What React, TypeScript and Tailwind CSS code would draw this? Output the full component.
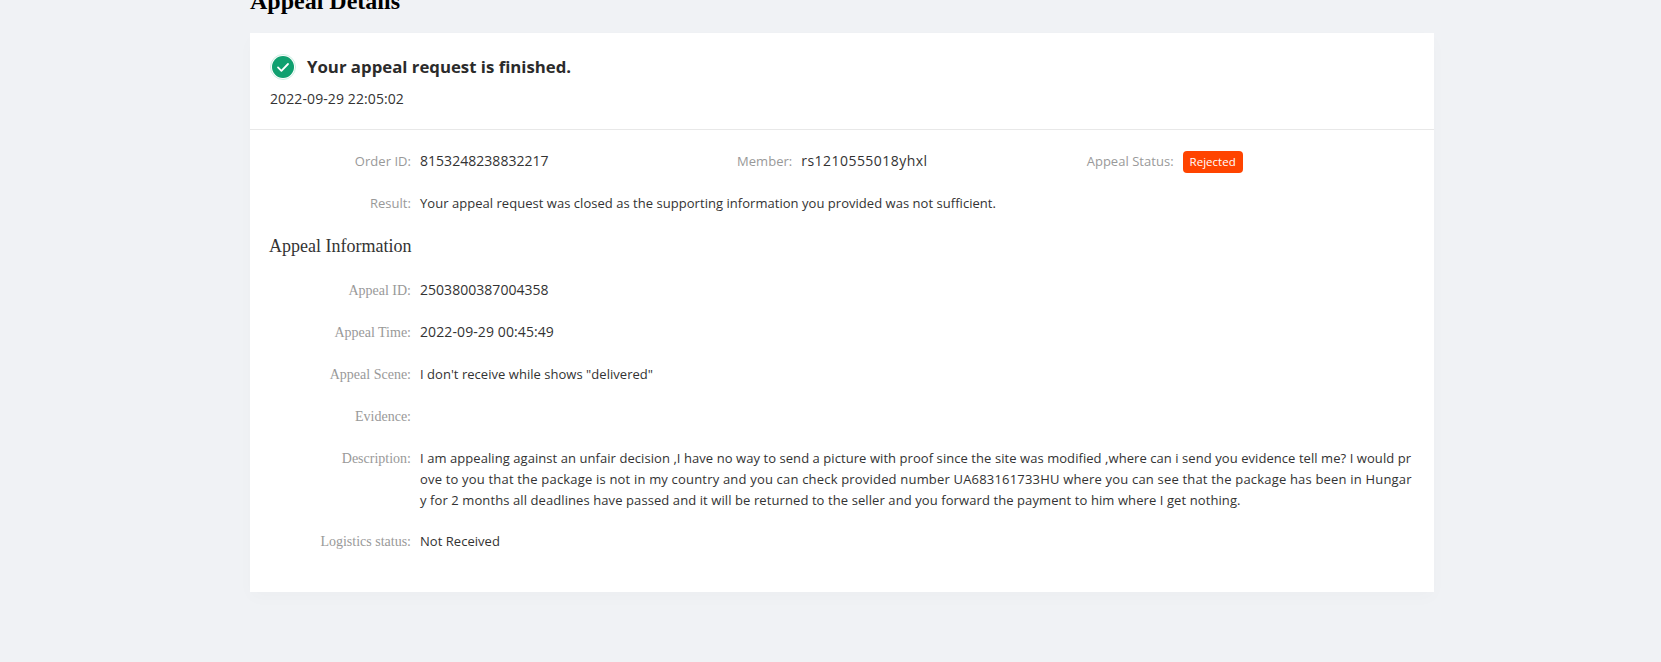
const sans = "font-['Open_Sans','Liberation_Sans',sans-serif]";

function Row({ label, serif, children, className = "" }: { label: string; serif?: boolean; children?: React.ReactNode; className?: string }) {
  return (
    <div className={`flex items-start text-[13px] leading-[21px] tracking-[0.035px] ${className}`}>
      <div className={`w-[141px] shrink-0 text-right text-[#999] ${serif ? "font-['Liberation_Serif',serif] text-[14px] tracking-normal" : ""}`}>{label}</div>
      <div className="ml-[9px] min-w-0 flex-1 text-[#333]">{children}</div>
    </div>
  );
}

function Num({ children, className = "" }: { children: React.ReactNode; className?: string }) {
  return <span className={`text-[14px] leading-[14px] ${className}`}>{children}</span>;
}

export default function App() {
  return (
    <div className={`h-[662px] overflow-hidden bg-[#f0f2f5] ${sans}`}>
      <div className="ml-[250px] w-[1184px]">
        <h1 className="-mt-[13px] h-[46px] font-['Liberation_Serif',serif] text-[24px] leading-[28px] font-bold text-black">Appeal Details</h1>
        <div className="h-[559px] bg-white shadow-[0_6px_16px_rgba(0,0,0,0.02)]">
          <div className="h-[97px] border-b border-[#e8e8e8] px-5 pt-[21px]">
            <div className="flex h-[26px] items-center gap-[11px]">
              <svg width="26" height="26" viewBox="0 0 26 26" className="shrink-0">
                <circle cx="13" cy="13" r="12.5" fill="#fff" stroke="#cdeee2" />
                <circle cx="13" cy="13" r="11" fill="#0fa06f" />
                <path d="M8 13.4l3.4 3.4L18 10" fill="none" stroke="#fff" strokeWidth="1.8" strokeLinecap="round" strokeLinejoin="round" />
              </svg>
              <div className="text-[16.8px] leading-[26px] font-bold text-[#2b2b2b]">Your appeal request is finished.</div>
            </div>
            <div className="mt-[8px] text-[14px] leading-[21px] tracking-[0.1px] text-[#333]">2022-09-29 22:05:02</div>
          </div>
          <div className="px-5 pt-[21px]">
            <div className="grid grid-cols-3">
              <Row label="Order ID:"><Num>8153248238832217</Num></Row>
              <Row label="Member:"><Num className="tracking-[0.45px]">rs1210555018yhxl</Num></Row>
              <Row label="Appeal Status:">
                <span className="inline-flex h-[22px] w-[60px] items-center justify-center rounded-[4px] bg-[#ff4400] text-[11.5px] leading-[22px] text-white">Rejected</span>
              </Row>
            </div>
            <Row label="Result:" className="mt-[20px]">Your appeal request was closed as the supporting information you provided was not sufficient.</Row>
            <h2 className="mt-[19px] -ml-px font-['Liberation_Serif',serif] text-[18px] leading-[26px] text-[#333]">Appeal Information</h2>
            <div className="mt-[21px] flex flex-col gap-[21px]">
              <Row serif label="Appeal ID:"><Num>2503800387004358</Num></Row>
              <Row serif label="Appeal Time:"><Num className="tracking-[0.1px]">2022-09-29 00:45:49</Num></Row>
              <Row serif label="Appeal Scene:">I don't receive while shows "delivered"</Row>
              <Row serif label="Evidence:"><span>&nbsp;</span></Row>
              <Row serif label="Description:">
                <span className="block whitespace-nowrap tracking-[0.064px]">I am appealing against an unfair decision ,I have no way to send a picture with proof since the site was modified ,where can i send you evidence tell me? I would pr</span>
                <span className="block whitespace-nowrap tracking-[0.185px]">ove to you that the package is not in my country and you can check provided number UA683161733HU where you can see that the package has been in Hungar</span>
                <span className="block whitespace-nowrap tracking-[0.09px]">y for 2 months all deadlines have passed and it will be returned to the seller and you forward the payment to him where I get nothing.</span>
              </Row>
              <Row serif label="Logistics status:" className="-mt-px">Not Received</Row>
            </div>
          </div>
        </div>
      </div>
    </div>
  );
}
